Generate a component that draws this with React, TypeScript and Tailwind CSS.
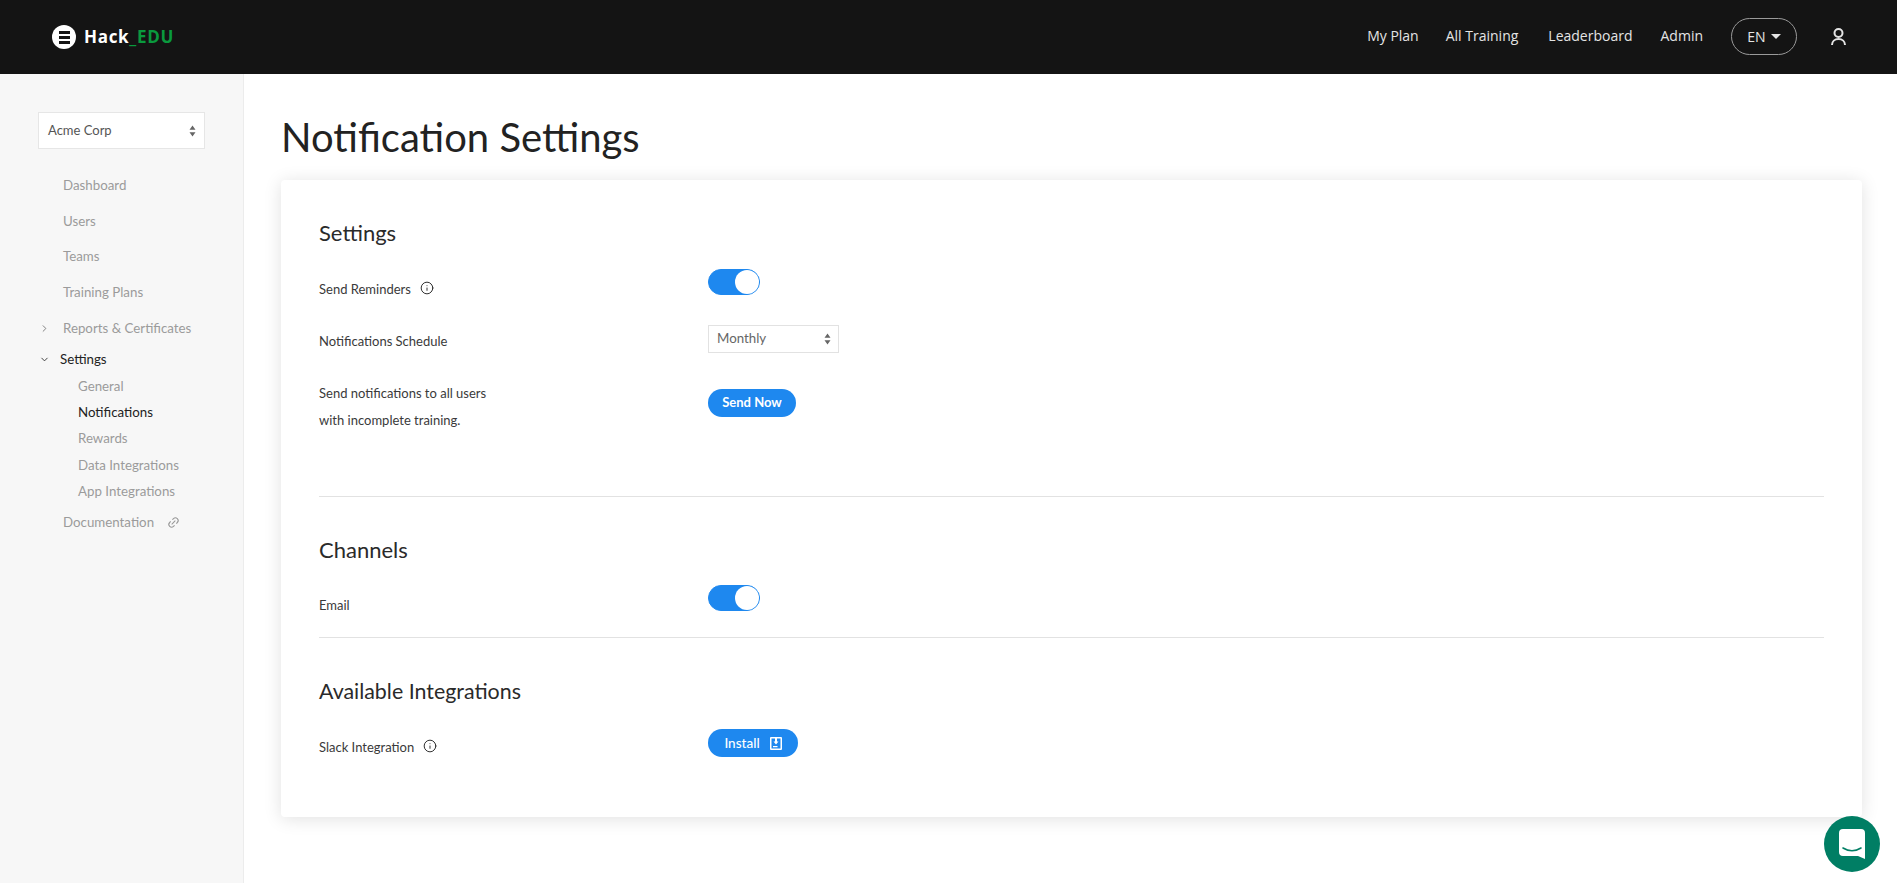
import React from "react";
import { ChevronRight, ChevronDown, Link2, Info } from "lucide-react";

const lato = "font-['Lato','Liberation_Sans',sans-serif]";

function Stepper() {
  return (
    <svg width="7" height="12" viewBox="0 0 7 12" className="shrink-0">
      <path d="M3.5 0.5 L6.5 4.7 H0.5 Z M3.5 11.5 L6.5 7.3 H0.5 Z" fill="#666" />
    </svg>
  );
}

function Toggle() {
  return (
    <div className="flex h-[26px] w-[52px] items-center justify-end rounded-full border border-[#1e88ef] bg-[#1e88ef]">
      <div className="h-6 w-6 rounded-full bg-white" />
    </div>
  );
}

function Row({ label, info, className, left, children }: { label?: string; info?: boolean; className?: string; left?: React.ReactNode; children: React.ReactNode }) {
  return (
    <div className={`flex items-start ${className ?? ""}`}>
      <div className="w-[389px] shrink-0 text-[13px] leading-[27px] text-[#3a3a3a]">
        {left ?? (
          <span className="flex items-center">
            {label}
            {info && <Info size={14} strokeWidth={1.6} className="relative -top-[2px] ml-[9px] text-[#222]" />}
          </span>
        )}
      </div>
      {children}
    </div>
  );
}

function SideItem({ label, active, chevron, sub }: { label: string; active?: boolean; chevron?: React.ReactNode; sub?: boolean }) {
  return (
    <div className={`flex items-center ${sub ? "h-[26.3px] pl-[78px]" : "h-[35.7px] pl-[63px]"} relative text-[13.3px] ${active ? "text-[#222]" : "text-[#9b9b9b]"}`}>
      {chevron}
      {label}
    </div>
  );
}

export default function App() {
  return (
    <div className={`flex h-[883px] flex-col overflow-hidden bg-white ${lato}`}>
      <header className="flex h-[74px] shrink-0 items-center bg-[#141414] pl-[52px] pr-[51px]">
        <div className="flex items-center">
          <div className="flex h-6 w-6 flex-col items-center justify-center gap-[2px] rounded-full bg-white">
            <div className="h-[3px] w-[11px] bg-[#141414]" />
            <div className="h-[3px] w-[11px] bg-[#141414]" />
            <div className="h-[3px] w-[11px] bg-[#141414]" />
          </div>
          <span className="ml-[8px] font-['Open_Sans',sans-serif] text-[17px] font-bold tracking-[0.7px] text-white">
            Hack<span className="text-[#0a9a3e]">_EDU</span>
          </span>
        </div>
        <nav className="ml-auto flex items-center font-['Open_Sans',sans-serif] text-[14px] text-[#e4e4e4]">
          <span className="-mt-[3px]">My Plan</span>
          <span className="-mt-[3px] ml-[27px]">All Training</span>
          <span className="-mt-[3px] ml-[30px]">Leaderboard</span>
          <span className="-mt-[3px] ml-[28px]">Admin</span>
          <div className="-mt-[1px] ml-[28px] flex h-[37px] w-[66px] items-center justify-center rounded-full border border-[#9a9a9a]">
            <span className="-mt-[1px]">EN</span>
            <svg width="10" height="5" viewBox="0 0 10 5" className="ml-[5px]"><path d="M0 0H10L5 5Z" fill="#e4e4e4" /></svg>
          </div>
          <svg width="15" height="18" viewBox="0 0 15 18" fill="none" stroke="#e4e4e4" strokeWidth="2" className="ml-[34px]">
            <circle cx="7.5" cy="5" r="4" />
            <path d="M1 17c0-3.6 2.8-6 6.5-6s6.500 2.400 6.500 6" />
          </svg>
        </nav>
      </header>
      <div className="flex min-h-0 flex-1">
        <aside className="w-[244px] shrink-0 border-r border-[#ececec] bg-[#f7f7f7] pt-[38px]">
          <div className="mx-[38px] flex h-[37px] w-[167px] items-center justify-between border-[1.5px] border-[#e6e6e6] bg-white pl-[9px] pr-[8px] text-[13px] text-[#555]">
            Acme Corp
            <Stepper />
          </div>
          <nav className="mt-[19px]">
            <SideItem label="Dashboard" />
            <SideItem label="Users" />
            <SideItem label="Teams" />
            <SideItem label="Training Plans" />
            <SideItem label="Reports & Certificates" chevron={<ChevronRight size={11} className="absolute left-[39px] text-[#777]" />} />
            <div className="relative flex h-[27px] items-center pl-[60px] text-[13.3px] text-[#222]">
              <ChevronDown size={11} className="absolute left-[39px] text-[#333]" />
              Settings
            </div>
            <SideItem sub label="General" />
            <SideItem sub active label="Notifications" />
            <SideItem sub label="Rewards" />
            <SideItem sub label="Data Integrations" />
            <SideItem sub label="App Integrations" />
            <div className="mt-[2px] flex h-[32px] items-center pl-[63px] text-[13.3px] text-[#9b9b9b]">
              Documentation
              <Link2 size={13} className="ml-[13px] -rotate-45 text-[#999]" />
            </div>
          </nav>
        </aside>
        <main className="min-w-0 flex-1 pl-[37px] pr-[35px]">
          <h1 className="mt-[35px] h-[71px] text-[40px] font-normal leading-[56px] text-[#222]">Notification Settings</h1>
          <section className="h-[637px] rounded-[4px] bg-white px-[38px] pt-[36px] shadow-[0_2px_18px_rgba(0,0,0,0.12)]">
            <h2 className="text-[22px] font-normal leading-[34px] text-[#2a2a2a]">Settings</h2>
            <Row label="Send Reminders" info className="mt-[26px]">
              <div className="-mt-[7px]"><Toggle /></div>
            </Row>
            <Row label="Notifications Schedule" className="mt-[25px]">
              <div className="-mt-[3px] flex h-[28px] w-[131px] items-center justify-between border border-[#e2e2e2] bg-white pl-[8px] pr-[7px] text-[13.3px] text-[#666]">
                Monthly
                <Stepper />
              </div>
            </Row>
            <Row className="mt-[25px]" left={<div>Send notifications to all users<br />with incomplete training.</div>}>
              <button className="mt-[9px] flex h-[28px] w-[88px] items-center justify-center rounded-full bg-[#1e88ef] text-[13px] font-bold text-white">Send Now</button>
            </Row>
            <div className="mt-[62px] border-t border-[#e2e2e2]" />
            <h2 className="mt-[36px] text-[22px] font-normal leading-[34px] text-[#2a2a2a]">Channels</h2>
            <Row label="Email" className="mt-[25px]">
              <div className="-mt-[7px]"><Toggle /></div>
            </Row>
            <div className="mt-[18px] border-t border-[#e2e2e2]" />
            <h2 className="mt-[36px] text-[21.400px] font-normal leading-[34px] text-[#2a2a2a]">Available Integrations</h2>
            <Row label="Slack Integration" info className="mt-[26px]">
              <button className="-mt-[5px] flex h-[28px] w-[90px] items-center justify-center gap-[10px] rounded-full bg-[#1e88ef] text-[13.5px] font-medium text-white">
                Install
                <svg width="12" height="13" viewBox="0 0 12 13">
                  <path fillRule="evenodd" d="M1 0H11a1 1 0 0 1 1 1V12a1 1 0 0 1-1 1H1a1 1 0 0 1-1-1V1a1 1 0 0 1 1-1ZM1.500 1.500V11.500H10.500V1.500H7V4.500H8.500L6 7.500 3.500 4.500H5V1.500ZM3 9H7.500V10.300H3Z" fill="#fff" />
                </svg>
              </button>
            </Row>
          </section>
        </main>
      </div>
      <button className="absolute left-[1824px] top-[816px] flex h-[56px] w-[56px] items-center justify-center rounded-full bg-[#007e64]">
        <svg width="26" height="30" viewBox="0 0 26 30">
          <path d="M4 0H22a4 4 0 0 1 4 4V30L19 27H4a4 4 0 0 1-4-4V4a4 4 0 0 1 4-4Z" fill="#fff" />
          <path d="M4 19Q13 24.500 22 19" fill="none" stroke="#007e64" strokeWidth="1.6" strokeLinecap="round" />
        </svg>
      </button>
    </div>
  );
}
